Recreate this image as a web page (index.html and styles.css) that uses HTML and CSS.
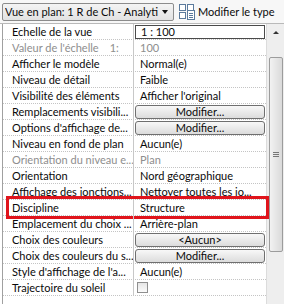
FILE: index.html
```html
<!DOCTYPE html>
<html lang="fr">
<head>
<meta charset="utf-8">
<link rel="stylesheet" href="styles.css">
</head>
<body>
<div class="toolbar">
  <div class="select">
    <span class="select-text">Vue en plan: 1 R de Ch - Analyti</span>
    <span class="select-arrow"></span>
  </div>
  <div class="edit-type">
    <svg class="edit-icon" width="16" height="16" viewBox="0 0 16 16">
      <rect x="0.5" y="0.5" width="6" height="6" fill="#fff" stroke="#5b7a9c"/>
      <rect x="0.5" y="8.5" width="6" height="6" fill="#fff" stroke="#5b7a9c"/>
      <rect x="8.5" y="0.5" width="6" height="6" fill="#fff" stroke="#5b7a9c"/>
      <rect x="8.5" y="6.5" width="7" height="9" fill="#fff" stroke="#5b7a9c"/>
      <line x1="10" y1="9.5" x2="14" y2="9.5" stroke="#5b7a9c"/>
      <line x1="10" y1="11.5" x2="14" y2="11.5" stroke="#5b7a9c"/>
      <line x1="10" y1="13.5" x2="14" y2="13.5" stroke="#5b7a9c"/>
    </svg>
    <span>Modifier le type</span>
  </div>
</div>
<div class="panel">
  <div class="grid">
    <div class="row"><div class="label">Echelle de la vue</div><div class="value"><div class="input">1 : 100</div></div></div>
    <div class="row dim"><div class="label">Valeur de l'échelle<span class="prefix">1:</span></div><div class="value text">100</div></div>
    <div class="row"><div class="label">Afficher le modèle</div><div class="value text">Normal(e)</div></div>
    <div class="row"><div class="label">Niveau de détail</div><div class="value text">Faible</div></div>
    <div class="row"><div class="label">Visibilité des éléments</div><div class="value text">Afficher l'original</div></div>
    <div class="row"><div class="label">Remplacements visibili...</div><div class="value"><div class="btn">Modifier...</div></div></div>
    <div class="row"><div class="label">Options d'affichage de...</div><div class="value"><div class="btn">Modifier...</div></div></div>
    <div class="row"><div class="label">Niveau en fond de plan</div><div class="value text">Aucun(e)</div></div>
    <div class="row dim"><div class="label">Orientation du niveau e...</div><div class="value text">Plan</div></div>
    <div class="row"><div class="label">Orientation</div><div class="value text">Nord géographique</div></div>
    <div class="row"><div class="label">Affichage des jonctions...</div><div class="value text">Nettoyer toutes les jo...</div></div>
    <div class="row highlighted"><div class="label">Discipline</div><div class="value text">Structure</div><div class="mark"></div></div>
    <div class="row"><div class="label">Emplacement du choix ...</div><div class="value text">Arrière-plan</div></div>
    <div class="row"><div class="label">Choix des couleurs</div><div class="value"><div class="btn">&lt;Aucun&gt;</div></div></div>
    <div class="row"><div class="label">Choix des couleurs du s...</div><div class="value"><div class="btn">Modifier...</div></div></div>
    <div class="row"><div class="label">Style d'affichage de l'a...</div><div class="value text">Aucun(e)</div></div>
    <div class="row"><div class="label">Trajectoire du soleil</div><div class="value"><div class="check"></div></div></div>
  </div>
  <div class="scrollbar">
    <div class="scroll-up"><span class="up-arrow"></span></div>
    <div class="thumb"><span class="grip"></span></div>
  </div>
</div>
</body>
</html>
```
FILE: styles.css
```css
html, body {
  margin: 0;
  padding: 0;
}
body {
  width: 284px;
  height: 304px;
  overflow: hidden;
  background: #ffffff;
  font-family: Lato, "Noto Sans", sans-serif;
  font-size: 11px;
  color: #0a0a0a;
}
.toolbar {
  height: 24px;
  display: flex;
  align-items: center;
  padding-left: 2px;
  background: #f7f7f7;
  box-sizing: border-box;
  border-bottom: 1px solid #b9b9b9;
}
.select {
  width: 172px;
  height: 18px;
  box-sizing: border-box;
  border: 1px solid #8c8c8c;
  border-radius: 2px;
  background: linear-gradient(#f4f4f4, #e2e2e2);
  display: flex;
  align-items: center;
  padding-left: 2px;
  white-space: nowrap;
  overflow: hidden;
}
.select-text {
  flex: 1;
  overflow: hidden;
}
.select-arrow {
  width: 0;
  height: 0;
  border-left: 3.5px solid transparent;
  border-right: 3.5px solid transparent;
  border-top: 4px solid #111;
  margin: 1px 5px 0 4px;
}
.edit-type {
  display: flex;
  align-items: center;
  margin-left: 5px;
  gap: 3px;
  white-space: nowrap;
}
.edit-icon {
  display: block;
}
.panel {
  display: flex;
  margin-left: 2px;
  border-left: 1px solid #a0a0a0;
}
.grid {
  width: 263px;
}
.row {
  position: relative;
  display: grid;
  grid-template-columns: 131px 1fr;
  height: 16px;
  box-sizing: border-box;
  border-bottom: 1px dotted #c4c4c4;
}
.label {
  padding-left: 9px;
  line-height: 15px;
  white-space: nowrap;
  overflow: hidden;
  border-right: 1px solid #c8c8c8;
}
.prefix {
  margin-left: 11px;
}
.value {
  display: flex;
  align-items: center;
  padding: 0 1px;
  white-space: nowrap;
  overflow: hidden;
}
.value.text {
  padding-left: 6px;
  line-height: 15px;
}
.dim .label, .dim .value {
  color: #8e8e8e;
}
.input {
  flex: 1;
  height: 14px;
  box-sizing: border-box;
  border: 1px solid #4a4a4a;
  background: #fff;
  padding-left: 5px;
  line-height: 12px;
}
.btn {
  flex: 1;
  height: 14px;
  box-sizing: border-box;
  border: 1px solid #6f6f6f;
  border-radius: 3px;
  background: linear-gradient(#f8f8f8, #dcdcdc);
  text-align: center;
  line-height: 12px;
}
.check {
  width: 11px;
  height: 11px;
  box-sizing: border-box;
  margin-left: 2px;
  border: 1px solid #8f8f8f;
  background: linear-gradient(#e6e6e6, #fbfbfb);
}
.mark {
  position: absolute;
  left: 3px;
  right: -3px;
  top: -4px;
  height: 23px;
  box-sizing: border-box;
  border: 3px solid #e0141c;
}
.scrollbar {
  width: 18px;
  height: 280px;
  background: #eeeeee;
  border-left: 1px solid #dcdcdc;
  box-sizing: border-box;
  display: flex;
  flex-direction: column;
  align-items: center;
}
.scroll-up {
  height: 17px;
  width: 100%;
  display: flex;
  align-items: center;
  justify-content: center;
}
.up-arrow {
  width: 0;
  height: 0;
  border-left: 3px solid transparent;
  border-right: 3px solid transparent;
  border-bottom: 3px solid #333;
}
.thumb {
  margin-top: 16px;
  width: 14px;
  height: 195px;
  box-sizing: border-box;
  border: 1px solid #9c9c9c;
  border-radius: 2px;
  background: linear-gradient(90deg, #f2f2f2, #dadada);
  display: flex;
  align-items: center;
  justify-content: center;
}
.grip {
  width: 6px;
  height: 5px;
  border-top: 1px solid #777;
  border-bottom: 1px solid #777;
  box-sizing: border-box;
  position: relative;
}
.grip::after {
  content: "";
  position: absolute;
  left: 0;
  right: 0;
  top: 1px;
  border-top: 1px solid #777;
}
```
